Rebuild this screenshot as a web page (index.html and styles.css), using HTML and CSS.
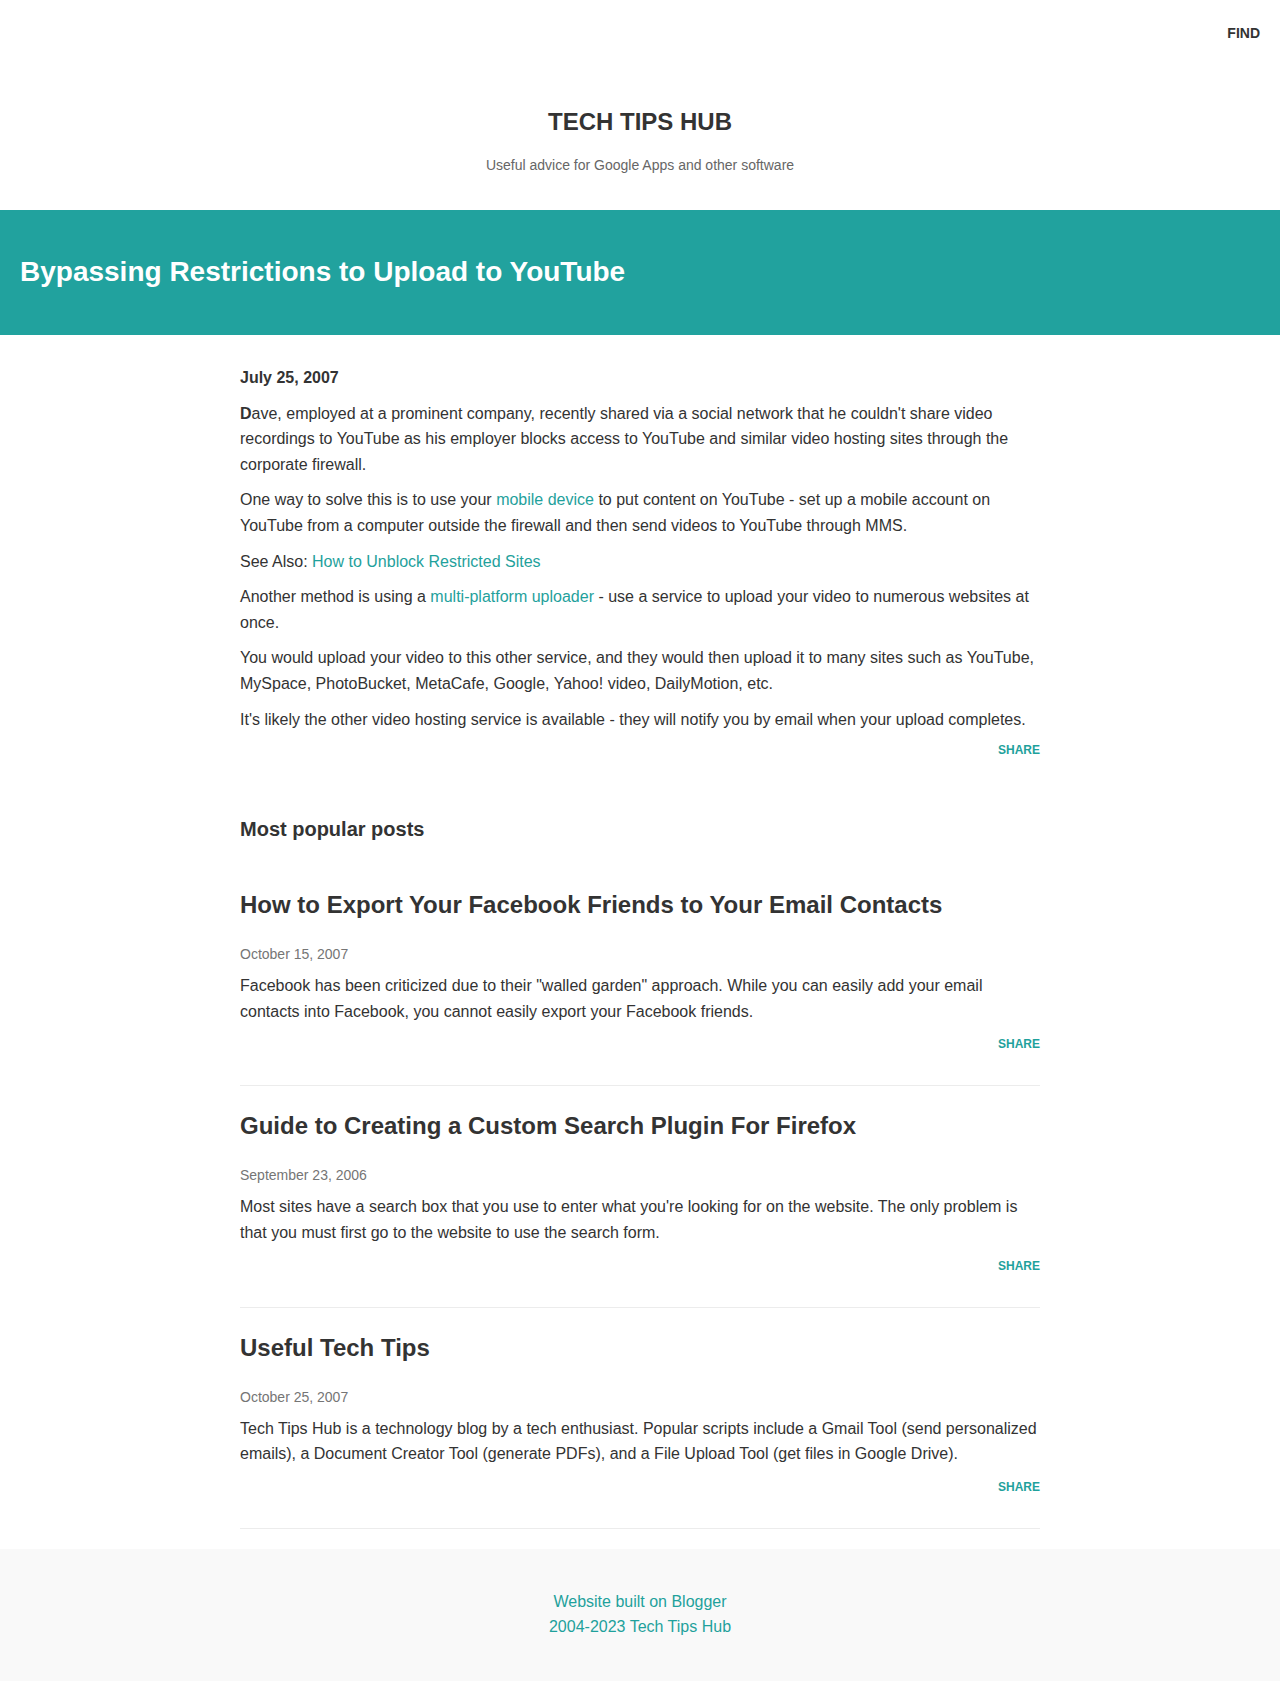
FILE: index.html
```html
<!DOCTYPE html>
<html lang="en">
<head>
<meta charset="utf-8">
<title>Tech Tips Hub</title>
<link rel="stylesheet" href="styles.css">
</head>
<body>
<header class="site-header">
  <div class="topbar"><a class="find" href="#">FIND</a></div>
  <div class="masthead">
    <h1 class="site-title">TECH TIPS HUB</h1>
    <p class="site-desc">Useful advice for Google Apps and other software</p>
  </div>
</header>

<div class="band">
  <h2 class="band-title">Bypassing Restrictions to Upload to YouTube</h2>
</div>

<main class="main">
  <article class="post">
    <p class="post-date">July 25, 2007</p>
    <p><b>D</b>ave, employed at a prominent company, recently shared via a social network that he couldn't share video recordings to YouTube as his employer blocks access to YouTube and similar video hosting sites through the corporate firewall.</p>
    <p>One way to solve this is to use your <a href="#">mobile device</a> to put content on YouTube - set up a mobile account on YouTube from a computer outside the firewall and then send videos to YouTube through MMS.</p>
    <p>See Also: <a href="#">How to Unblock Restricted Sites</a></p>
    <p>Another method is using a <a href="#">multi-platform uploader</a> - use a service to upload your video to numerous websites at once.</p>
    <p>You would upload your video to this other service, and they would then upload it to many sites such as YouTube, MySpace, PhotoBucket, MetaCafe, Google, Yahoo! video, DailyMotion, etc.</p>
    <p>It's likely the other video hosting service is available - they will notify you by email when your upload completes.</p>
    <div class="share"><a href="#">SHARE</a></div>
  </article>

  <section class="popular">
    <h3 class="popular-title">Most popular posts</h3>

    <article class="item">
      <h4 class="item-title">How to Export Your Facebook Friends to Your Email Contacts</h4>
      <div class="item-date">October 15, 2007</div>
      <p class="item-text">Facebook has been criticized due to their "walled garden" approach. While you can easily add your email contacts into Facebook, you cannot easily export your Facebook friends.</p>
      <div class="share"><a href="#">SHARE</a></div>
    </article>

    <article class="item">
      <h4 class="item-title">Guide to Creating a Custom Search Plugin For Firefox</h4>
      <div class="item-date">September 23, 2006</div>
      <p class="item-text">Most sites have a search box that you use to enter what you're looking for on the website. The only problem is that you must first go to the website to use the search form.</p>
      <div class="share"><a href="#">SHARE</a></div>
    </article>

    <article class="item">
      <h4 class="item-title">Useful Tech Tips</h4>
      <div class="item-date">October 25, 2007</div>
      <p class="item-text">Tech Tips Hub is a technology blog by a tech enthusiast. Popular scripts include a Gmail Tool (send personalized emails), a Document Creator Tool (generate PDFs), and a File Upload Tool (get files in Google Drive).</p>
      <div class="share"><a href="#">SHARE</a></div>
    </article>
  </section>
</main>

<footer class="footer">
  <div><a href="#">Website built on Blogger</a></div>
  <div><a href="#">2004-2023 Tech Tips Hub</a></div>
</footer>
</body>
</html>
```

FILE: styles.css
```css
* { box-sizing: border-box; }

html, body {
  margin: 0;
  padding: 0;
  background: #ffffff;
}

body {
  font-family: "Liberation Sans", Arial, Helvetica, sans-serif;
  color: #333333;
  font-size: 16px;
}

a {
  color: #1fa19c;
  text-decoration: none;
}

.topbar {
  display: flex;
  justify-content: flex-end;
  padding: 24px 20px 0;
}

.find {
  font-size: 14px;
  line-height: 18px;
  font-weight: bold;
  color: #333333;
}

.masthead {
  text-align: center;
  padding: 65px 0 35px;
}

.site-title {
  margin: 0;
  font-size: 24px;
  line-height: 29px;
  font-weight: bold;
  color: #333333;
}

.site-desc {
  margin: 19px 0 0;
  font-size: 14px;
  line-height: 20px;
  color: #666666;
}

.band {
  background: #21a29e;
  padding: 45px 20px 46px;
}

.band-title {
  margin: 0;
  color: #ffffff;
  font-size: 28px;
  line-height: 34px;
  font-weight: bold;
}

.main {
  width: 800px;
  margin: 0 auto;
}

.post {
  padding-top: 30px;
}

.post p {
  margin: 0 0 10px;
  font-size: 16px;
  line-height: 25.6px;
}

.post .post-date {
  font-weight: bold;
}

.share {
  text-align: right;
  font-size: 12px;
  line-height: 16px;
  font-weight: bold;
}

.popular-title {
  margin: 59px 0 24px;
  font-size: 20px;
  line-height: 24px;
  font-weight: bold;
}

.item {
  padding: 25px 0 33px;
  border-bottom: 1px solid #ececec;
}

.item-title {
  margin: 0;
  font-size: 24px;
  line-height: 29px;
  font-weight: bold;
  color: #333333;
}

.item-date {
  margin-top: 25px;
  font-size: 14px;
  line-height: 20px;
  color: #757575;
}

.item-text {
  margin: 9px 0 0;
  font-size: 16px;
  line-height: 25.6px;
}

.item .share {
  margin-top: 12px;
}

.footer {
  margin-top: 20px;
  background: #f9f9f9;
  padding: 40px 0 41px;
  text-align: center;
  font-size: 16px;
  line-height: 25.6px;
}
```
